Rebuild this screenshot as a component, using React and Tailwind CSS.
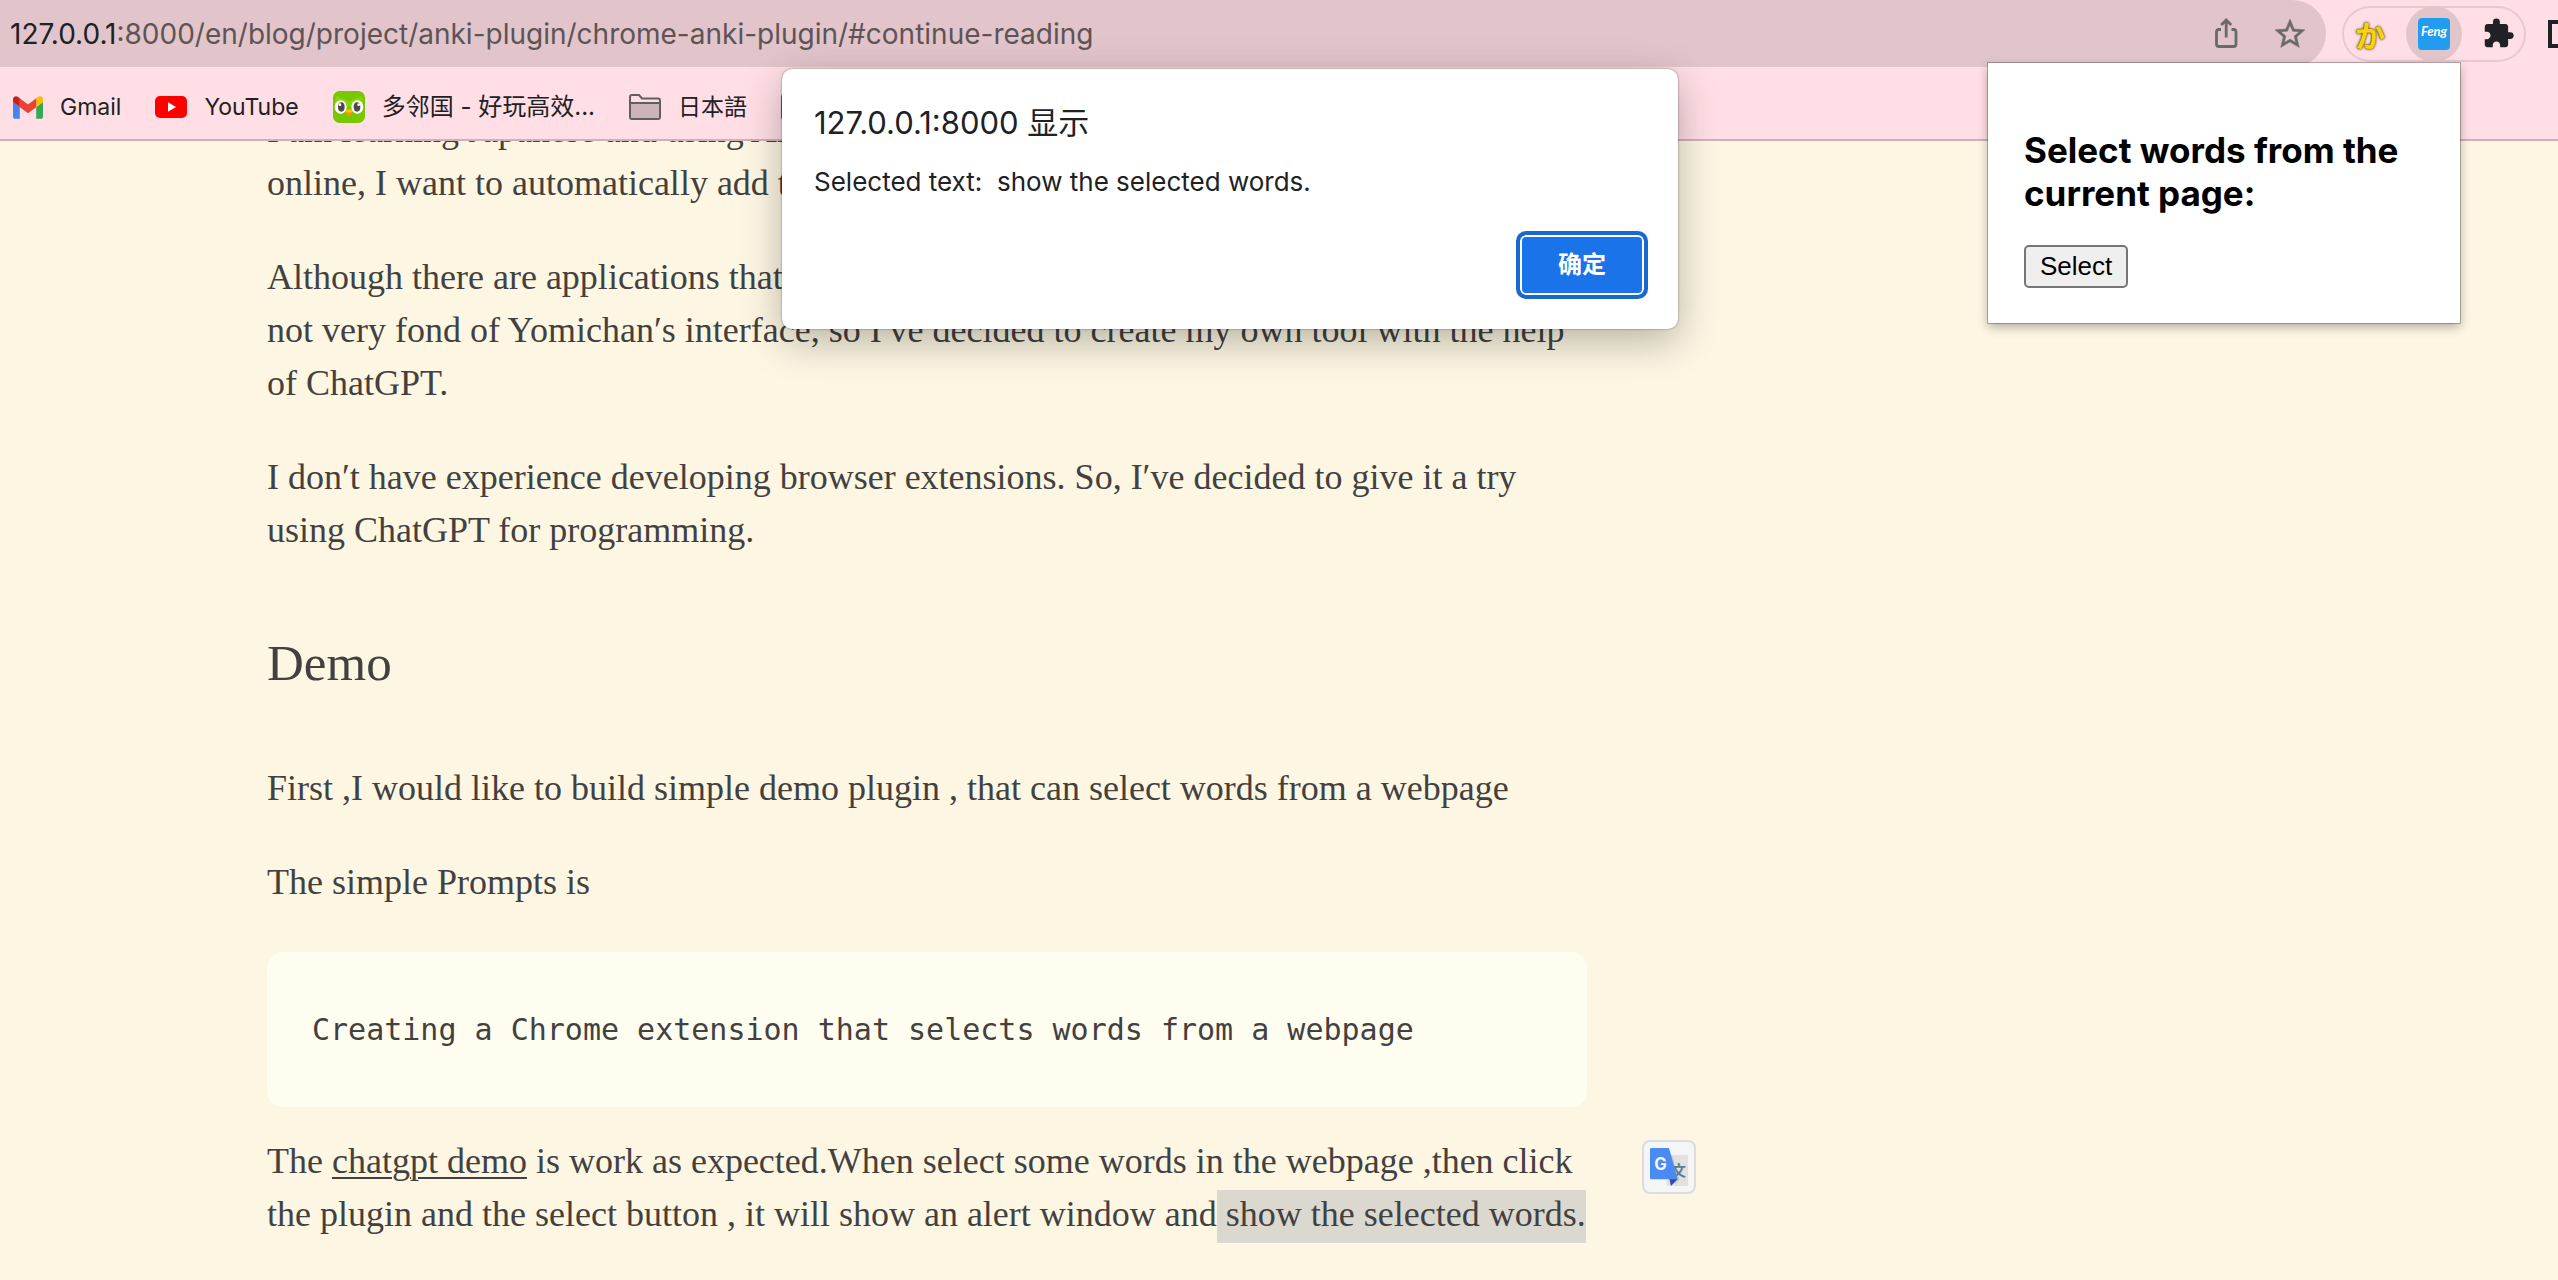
const UI = "font-['Inter','Noto_Sans_CJK_SC',sans-serif]";

function Line({ children }) {
  return <span className="block whitespace-nowrap">{children}</span>;
}

function ShareIcon() {
  return (
    <svg className="size-9" viewBox="0 0 36 36" fill="none" stroke="#6b6a6b" strokeWidth="2.8" aria-hidden="true">
      <path d="M13 13.500H11a2.500 2.500 0 0 0-2.500 2.500V28a2.500 2.500 0 0 0 2.500 2.500h14.500a2.500 2.500 0 0 0 2.500-2.500V16a2.500 2.500 0 0 0-2.500-2.500H23.500" />
      <path d="M18.200 21.500V4.500M13.200 9l5-5 5 5" />
    </svg>
  );
}

function StarIcon() {
  return (
    <svg className="size-9" viewBox="0 0 24 24" fill="#6b6a6b" stroke="#6b6a6b" strokeWidth="0.3" aria-hidden="true">
      <path d="M22 9.240l-7.190-.620L12 2 9.190 8.630 2 9.240l5.460 4.730L5.820 21 12 17.270 18.180 21l-1.630-7.030L22 9.240zM12 15.400l-3.760 2.270 1-4.280-3.320-2.880 4.380-.380L12 6.100l1.710 4.040 4.380.380-3.320 2.880 1 4.280L12 15.400z" />
    </svg>
  );
}

function PuzzleIcon() {
  return (
    <svg className="size-[33px]" viewBox="0 0 24 24" fill="#202124" aria-hidden="true">
      <path d="M20.5 11H19V7c0-1.100-.9-2-2-2h-4V3.500a2.500 2.500 0 0 0-5 0V5H4c-1.100 0-1.990.9-1.990 2v3.800H3.500c1.490 0 2.700 1.210 2.700 2.700s-1.210 2.700-2.700 2.700H2V20c0 1.100.9 2 2 2h3.800v-1.500c0-1.490 1.210-2.700 2.700-2.700 1.490 0 2.700 1.210 2.700 2.700V22H17c1.100 0 2-.9 2-2v-4h1.500a2.500 2.500 0 0 0 0-5z" />
    </svg>
  );
}

function GmailIcon() {
  return (
    <svg className="h-[23px] w-[30px]" viewBox="52 42 88 66" aria-hidden="true">
      <path fill="#4285f4" d="M58 108h14V74L52 59v43c0 3.320 2.690 6 6 6" />
      <path fill="#34a853" d="M120 108h14c3.320 0 6-2.690 6-6V59l-20 15" />
      <path fill="#fbbc04" d="M120 48v26l20-15v-8c0-7.420-8.470-11.650-14.400-7.200" />
      <path fill="#ea4335" d="M72 74V48l24 18 24-18v26L96 92" />
      <path fill="#c5221f" d="M52 51v8l20 15V48l-5.600-4.200c-5.940-4.450-14.400-.220-14.400 7.200" />
    </svg>
  );
}

function YouTubeIcon() {
  return (
    <svg className="h-[22px] w-8" viewBox="0 0 32 22" aria-hidden="true">
      <rect width="32" height="22" rx="5" fill="#f00" />
      <path d="M13 6.200v9.600l8-4.800z" fill="#fff" />
    </svg>
  );
}

function OwlIcon() {
  return (
    <svg className="size-8" viewBox="0 0 96 96" aria-hidden="true">
      <rect width="96" height="96" rx="20" fill="#78c800" />
      <path d="M10 14c8 8 22 6 38 18 16-12 30-10 38-18 4 14 4 24 0 32H10c-4-8-4-18 0-32z" fill="#84d808" />
      <ellipse cx="23" cy="48" rx="18" ry="20" fill="#fff" />
      <ellipse cx="73" cy="48" rx="18" ry="20" fill="#fff" />
      <ellipse cx="25" cy="48" rx="10" ry="14" fill="#4b4b4b" />
      <ellipse cx="72" cy="48" rx="10" ry="14" fill="#4b4b4b" />
      <circle cx="21" cy="41" r="4" fill="#fff" />
      <circle cx="77" cy="41" r="4" fill="#fff" />
      <path d="M37 62c2-10 20-10 22 0-2 5-6 13-11 13s-9-8-11-13z" fill="#ff9600" />
      <path d="M37 62c2-10 20-10 22 0-6 3-16 3-22 0z" fill="#ffc200" />
    </svg>
  );
}

function FolderIcon() {
  return (
    <svg className="h-[26px] w-8" viewBox="0 0 32 26" aria-hidden="true">
      <path d="M1 3a2 2 0 0 1 2-2h7l3 3.500h16a2 2 0 0 1 2 2V23a2 2 0 0 1-2 2H3a2 2 0 0 1-2-2z" fill="#ffdfe5" stroke="#5f5f60" strokeWidth="2" />
      <path d="M2 9h28v15H2z" fill="#cdb4bb" />
      <path d="M1 9h30" stroke="#5f5f60" strokeWidth="2" />
    </svg>
  );
}

function TranslateIcon() {
  return (
    <svg className="size-[54px] shrink-0" viewBox="36 30 162 162" aria-hidden="true">
      <rect x="110" y="75" width="64" height="93" rx="4" fill="#e1e1e1" />
      <path d="M122 75h4l22 74-14 12z" fill="#c4c4c6" />
      <text x="124" y="138" fontSize="44" fill="#607d8b" fontWeight="700" fontFamily="Noto Sans CJK SC, sans-serif">文</text>
      <path d="M118 147h25l-20 21z" fill="#3949ab" />
      <path d="M64 54h53l26 94H64a4 4 0 0 1-4-4V58a4 4 0 0 1 4-4z" fill="#4a8af4" />
      <text x="73" y="119" fontSize="50" fill="#f7f9ff" fontWeight="700" fontFamily="Inter, sans-serif">G</text>
    </svg>
  );
}

function Toolbar() {
  return (
    <div className="flex h-[67px] items-center">
      <div className="flex h-full min-w-0 flex-1 items-center rounded-r-full bg-[#e1c5ca] pr-[18px] pl-2.5">
        <div role="textbox" aria-label="Address" tabIndex={0} className="min-w-0 flex-1 truncate text-[28px] leading-9 text-[#5f5356]">
          <span className="text-[#202124]">127.0.0.1</span>:8000/en/blog/project/anki-plugin/chrome-anki-plugin/#continue-reading
        </div>
        <div className="flex gap-7">
          <button aria-label="Share"><ShareIcon /></button>
          <button aria-label="Bookmark"><StarIcon /></button>
        </div>
      </div>
      <div className="ml-4 flex gap-2 rounded-full inset-ring-2 inset-ring-[#e6c9cf]">
        <button className="flex size-14 items-center justify-center font-['Noto_Sans_CJK_JP',sans-serif] text-[30px] leading-none font-bold text-[#fbd305] [text-shadow:0_0_3px_#5a4a00,0_0_2px_#5a4a00]">
          か
        </button>
        <button className="flex size-14 items-center justify-center rounded-full bg-[#e1c5ca]">
          <span className="flex size-8 items-center justify-center rounded-sm bg-[#219cef] pb-1 font-['Lato',sans-serif] text-[13px] leading-none font-bold text-white italic">
            Feng
          </span>
        </button>
        <button aria-label="Extensions" className="flex size-14 items-center justify-center"><PuzzleIcon /></button>
      </div>
      <button aria-label="Side panel" className="ml-[22px] h-7 w-2.5 border-4 border-r-0 border-[#202124]" />
    </div>
  );
}

function Bookmark({ icon, children }) {
  return (
    <a href="#bookmark" className="flex shrink-0 items-center gap-[17px] whitespace-nowrap">
      {icon}
      {children}
    </a>
  );
}

function Bookmarks() {
  return (
    <nav aria-label="Bookmarks" className="flex h-[74px] items-center gap-[34px] border-b-2 border-[#cdb1bb] pt-2 pl-[13px] text-[23px] leading-8 text-[#202124]">
      <Bookmark icon={<GmailIcon />}>Gmail</Bookmark>
      <Bookmark icon={<YouTubeIcon />}>YouTube</Bookmark>
      <Bookmark icon={<OwlIcon />}>
        <span className="text-2xl">多邻国 - 好玩高效...</span>
      </Bookmark>
      <Bookmark icon={<FolderIcon />}>日本語</Bookmark>
      <Bookmark icon={<FolderIcon />} />
    </nav>
  );
}

function Article() {
  return (
    <main className="flex-1 overflow-hidden">
      <article className="-mt-[37px] ml-[267px] w-full max-w-[1320px] font-['Liberation_Serif',serif] text-[36px] leading-[53px] text-[#424140]">
        <p>
          <Line>I am learning Japanese and using Anki</Line>
          <Line>online, I want to automatically add the</Line>
        </p>
        <p className="mt-[41px]">
          <Line>Although there are applications that</Line>
          <Line>not very fond of Yomichan′s interface, so I′ve decided to create my own tool with the help</Line>
          <Line>of ChatGPT.</Line>
        </p>
        <p className="mt-[41px]">
          <Line>I don′t have experience developing browser extensions. So, I′ve decided to give it a try</Line>
          <Line>using ChatGPT for programming.</Line>
        </p>
        <h2 className="mt-[76px] mb-[69px] text-[51px] leading-[60px]">Demo</h2>
        <p>First ,I would like to build simple demo plugin , that can select words from a webpage</p>
        <p className="mt-[41px]">The simple Prompts is</p>
        <pre className="mt-[43px] rounded-2xl bg-[#fffdf0] px-[45px] py-[51px] text-[30px]">
          <code className="block font-['DejaVu_Sans_Mono',monospace]">Creating a Chrome extension that selects words from a webpage</code>
        </pre>
        <div className="relative mt-7">
          <p>
            <Line>
              The <a href="#demo" className="underline decoration-2 underline-offset-4">chatgpt demo</a> is work as expected.When select some words in the webpage ,then click
            </Line>
            <Line>
              the plugin and the select button , it will show an alert window and
              <mark className="bg-[#dbd8d0] pt-1 pb-[9px] whitespace-pre text-inherit"> show the selected words.</mark>
            </Line>
          </p>
          <button aria-label="Translate" className="absolute top-[5px] left-full ml-[55px] flex size-[54px] items-center justify-center rounded-lg bg-[#f5f5f5] inset-ring-2 inset-ring-[#dcdcdf]">
            <TranslateIcon />
          </button>
        </div>
      </article>
    </main>
  );
}

function AlertDialog() {
  return (
    <div role="alertdialog" aria-labelledby="alert-title" className="absolute top-[69px] left-[782px] flex w-[896px] flex-col rounded-[10px] bg-white pt-[36px] pr-[30px] pb-[30px] pl-8 text-[#202124] shadow-[0_0_2px_rgba(0,0,0,0.5),0_12px_40px_rgba(0,0,0,0.28)]">
      <h1 id="alert-title" className="text-[31px] leading-9">127.0.0.1:8000 显示</h1>
      <p className="mt-[23px] text-[26px] leading-9 whitespace-pre">Selected text:  show the selected words.</p>
      <button className="mt-[31px] h-[68px] w-[132px] self-end rounded-[10px] border-4 border-[#1967d2] bg-[#1a73e8] text-2xl font-bold text-white inset-ring-2 inset-ring-white">
        确定
      </button>
    </div>
  );
}

function ExtensionPopup() {
  return (
    <section className="absolute top-[63px] right-[98px] w-[472px] bg-white px-9 pt-[66px] pb-[35px] text-black shadow-[0_0_0_1px_rgba(0,0,0,0.25),0_4px_10px_rgba(0,0,0,0.3)]">
      <h2 className="text-[35px] leading-[43px] font-bold">Select words from the current page:</h2>
      <button className="mt-[30px] flex h-[43px] items-center rounded-[5px] border-2 border-[#767676] bg-[#efefef] px-3.5 pb-0.5 font-['Liberation_Sans',sans-serif] text-[26px] leading-8">
        Select
      </button>
    </section>
  );
}

export default function App() {
  return (
    <div className={`relative flex h-screen flex-col overflow-hidden bg-[#fdf6e3] ${UI}`}>
      <header className="shrink-0 bg-[#ffdfe5]">
        <Toolbar />
        <Bookmarks />
      </header>
      <Article />
      <AlertDialog />
      <ExtensionPopup />
    </div>
  );
}
